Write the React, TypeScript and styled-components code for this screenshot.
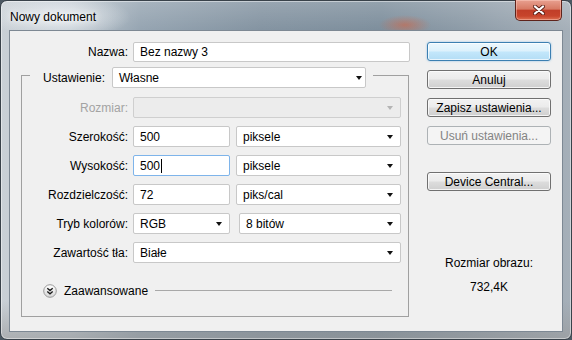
import React from 'react';
import styled, { createGlobalStyle } from 'styled-components';

const GlobalStyle = createGlobalStyle`
    html, body {
        margin: 0;
        padding: 0;
        background: #4c5862;
    }

    body {
        width: 572px;
        height: 340px;
        overflow: hidden;
        font-family: "Liberation Sans", Arial, sans-serif;
        font-size: 12px;
        color: #000;
    }

    * {
        box-sizing: border-box;
    }
`;

const Window = styled.div`
    width: 572px;
    height: 340px;
    display: flex;
    flex-direction: column;
    padding: 0 8px 7px 8px;
    border: 1px solid #39424a;
    border-radius: 7px;
    box-shadow: inset 0 0 0 1px rgba(255, 255, 255, 0.45);
    background:
        radial-gradient(ellipse 26px 10px at 404px 24px, rgba(214, 96, 60, 0.55), rgba(214, 96, 60, 0) 100%),
        radial-gradient(ellipse 70px 22px at 60px 16px, rgba(240, 243, 246, 0.85), rgba(240, 243, 246, 0) 100%),
        linear-gradient(180deg, rgba(255, 255, 255, 0.18) 0px, rgba(255, 255, 255, 0) 30px, rgba(0, 0, 0, 0) 300px, rgba(150, 150, 150, 0.6) 340px),
        linear-gradient(90deg, #c9d0d6 0px, #bcc6ce 70px, #95a4b1 140px, #8393a1 260px, #7d8e9c 380px, #8e9ca8 470px, #a6b0b9 572px);
`;

const TitleBar = styled.div`
    height: 29px;
    display: flex;
    align-items: flex-start;
`;

const Title = styled.div`
    padding: 8px 0 0 1px;
    line-height: 16px;
    font-family: "Liberation Sans", Arial, sans-serif;
    font-size: 12px;
    color: #000;
    text-shadow: 0 0 10px rgba(255, 255, 255, 0.95), 0 0 5px rgba(255, 255, 255, 0.8);
`;

const CloseButton = styled.div`
    margin: -1px 1px 0 auto;
    width: 47px;
    height: 21px;
    display: flex;
    align-items: center;
    justify-content: center;
    border: 1px solid #5e231b;
    border-top: none;
    border-radius: 0 0 5px 5px;
    background: linear-gradient(180deg, #e8a090 0%, #d77a64 45%, #c13e28 52%, #c7442b 80%, #de7152 100%);
    box-shadow: inset 0 0 0 1px rgba(255, 210, 200, 0.45);
`;

const Client = styled.div`
    flex: 1;
    display: flex;
    padding: 11px 11px 0 11px;
    background: #f0f0f0;
    border: 1px solid #7d8893;
`;

const LeftPanel = styled.div`
    width: 389px;
    display: flex;
    flex-direction: column;
`;

const FieldRow = styled.div<{ $label: number; $height?: number }>`
    display: grid;
    grid-template-columns: ${p => p.$label}px 1fr;
    column-gap: 5px;
    height: ${p => p.$height ?? 21}px;
`;

const Label = styled.div<{ $disabled?: boolean }>`
    display: flex;
    align-items: center;
    justify-content: flex-end;
    white-space: nowrap;
    color: ${p => (p.$disabled ? '#a3a3a3' : '#000')};
`;

const Controls = styled.div<{ $gap?: number }>`
    display: flex;
    gap: ${p => p.$gap ?? 6}px;
`;

const TextBox = styled.div<{ $width?: number; $focused?: boolean }>`
    ${p => (p.$width ? `width: ${p.$width}px;` : 'flex: 1;')}
    display: flex;
    align-items: center;
    padding-left: 6px;
    background: #fff;
    border: 1px solid ${p => (p.$focused ? '#7eb4ea' : '#c8c8c8')};
    border-radius: 2px;
    white-space: nowrap;
`;

const Caret = styled.span`
    display: inline-block;
    width: 1px;
    height: 14px;
    margin-left: 1px;
    background: #000;
`;

const SelectBox = styled.div<{ $width?: number; $disabled?: boolean }>`
    ${p => (p.$width ? `width: ${p.$width}px;` : 'flex: 1;')}
    display: flex;
    align-items: center;
    padding-left: 6px;
    background: ${p => (p.$disabled ? '#ececec' : '#fff')};
    border: 1px solid ${p => (p.$disabled ? '#cfcfcf' : '#c8c8c8')};
    border-radius: 2px;
    white-space: nowrap;
`;

const SelectText = styled.span`
    flex: 1;
`;

const Arrow = styled.span<{ $inset: number; $disabled?: boolean }>`
    width: 0;
    height: 0;
    margin: 1px ${p => p.$inset}px 0 0;
    border-left: 3px solid transparent;
    border-right: 3px solid transparent;
    border-top: 4px solid ${p => (p.$disabled ? '#b4b4b4' : '#111')};
`;

const GroupBox = styled.fieldset`
    width: 388px;
    margin: 0;
    padding: 0 7px 18px 0;
    border: 1px solid #a0a0a0;
    min-inline-size: 0;
`;

const Legend = styled.legend`
    margin-left: 8px;
    padding: 5px 7px 0 13px;
`;

const LegendRow = styled.div`
    display: flex;
    height: 21px;
    gap: 7px;
`;

const GroupRows = styled.div`
    display: flex;
    flex-direction: column;
    gap: 8px;
    padding-top: 9px;
`;

const AdvancedRow = styled.div`
    display: flex;
    align-items: center;
    height: 15px;
    margin-top: 20px;
    padding: 0 9px 0 21px;
    gap: 7px;
`;

const AdvancedLine = styled.div`
    flex: 1;
    height: 1px;
    background: #a8a8a8;
`;

const RightPanel = styled.div`
    width: 124px;
    margin-left: 17px;
    display: flex;
    flex-direction: column;
`;

const Button = styled.div<{ $variant?: 'default' | 'disabled'; $spaceBefore?: number }>`
    height: 19px;
    margin-bottom: 9px;
    margin-top: ${p => p.$spaceBefore ?? 0}px;
    display: flex;
    align-items: center;
    justify-content: center;
    border-radius: 3px;
    white-space: nowrap;
    border: 1px solid ${p =>
        p.$variant === 'default' ? '#3c7fb1' : p.$variant === 'disabled' ? '#adb2b5' : '#707070'};
    color: ${p => (p.$variant === 'disabled' ? '#838383' : '#000')};
    background: ${p =>
        p.$variant === 'default'
            ? 'linear-gradient(180deg, #ecf7fd 0%, #dcf1fc 48%, #c3e7fb 52%, #b3ddf5 100%)'
            : p.$variant === 'disabled'
            ? '#f4f4f4'
            : 'linear-gradient(180deg, #f2f2f2 0%, #ebebeb 48%, #dddddd 52%, #cfcfcf 100%)'};
    box-shadow: ${p =>
        p.$variant === 'default'
            ? 'inset 0 0 0 1px rgba(255,255,255,0.7), 0 0 2px rgba(60,150,220,0.6)'
            : p.$variant === 'disabled'
            ? 'none'
            : 'inset 0 0 0 1px rgba(252,252,252,0.8)'};
`;

const ImageSize = styled.div`
    margin-top: 55px;
    display: flex;
    flex-direction: column;
    align-items: center;
    gap: 8px;
    line-height: 16px;
`;

function CloseGlyph() {
    return (
        <svg width="12" height="10" viewBox="0 0 12 10">
            <path d="M2 1.5 L10 8.5 M10 1.5 L2 8.5" stroke="#5a1d14" strokeWidth="4" strokeLinecap="round" />
            <path d="M2 1.5 L10 8.5 M10 1.5 L2 8.5" stroke="#ffffff" strokeWidth="2.3" strokeLinecap="round" />
        </svg>
    );
}

function ExpandIcon() {
    return (
        <svg width="14" height="14" viewBox="0 0 14 14">
            <defs>
                <linearGradient id="exp" x1="0" y1="0" x2="0" y2="1">
                    <stop offset="0" stopColor="#ffffff" />
                    <stop offset="1" stopColor="#d6d6d6" />
                </linearGradient>
            </defs>
            <circle cx="7" cy="7" r="6.3" fill="url(#exp)" stroke="#9a9a9a" strokeWidth="1" />
            <path d="M4.3 4.2 L7 6.6 L9.7 4.2 M4.3 7.4 L7 9.8 L9.7 7.4" fill="none" stroke="#1a1a1a" strokeWidth="1.3" />
        </svg>
    );
}

interface SelectProps {
    value?: string;
    width?: number;
    disabled?: boolean;
    inset?: number;
}

function Select({ value, width, disabled, inset = 7 }: SelectProps) {
    return (
        <SelectBox $width={width} $disabled={disabled}>
            <SelectText>{value}</SelectText>
            <Arrow $inset={inset} $disabled={disabled} />
        </SelectBox>
    );
}

function App() {
    return (
        <>
            <GlobalStyle />
            <Window>
                <TitleBar>
                    <Title>Nowy dokument</Title>
                    <CloseButton>
                        <CloseGlyph />
                    </CloseButton>
                </TitleBar>
                <Client>
                    <LeftPanel>
                        <FieldRow $label={107} $height={20}>
                            <Label>Nazwa:</Label>
                            <TextBox>Bez nazwy 3</TextBox>
                        </FieldRow>
                        <GroupBox>
                            <Legend>
                                <LegendRow>
                                    <Label>Ustawienie:</Label>
                                    <Select value="Własne" width={254} inset={3} />
                                </LegendRow>
                            </Legend>
                            <GroupRows>
                                <FieldRow $label={106}>
                                    <Label $disabled>Rozmiar:</Label>
                                    <Select disabled />
                                </FieldRow>
                                <FieldRow $label={106}>
                                    <Label>Szerokość:</Label>
                                    <Controls>
                                        <TextBox $width={97}>500</TextBox>
                                        <Select value="piksele" />
                                    </Controls>
                                </FieldRow>
                                <FieldRow $label={106}>
                                    <Label>Wysokość:</Label>
                                    <Controls>
                                        <TextBox $width={97} $focused>
                                            500<Caret />
                                        </TextBox>
                                        <Select value="piksele" />
                                    </Controls>
                                </FieldRow>
                                <FieldRow $label={106}>
                                    <Label>Rozdzielczość:</Label>
                                    <Controls>
                                        <TextBox $width={97}>72</TextBox>
                                        <Select value="piks/cal" />
                                    </Controls>
                                </FieldRow>
                                <FieldRow $label={106}>
                                    <Label>Tryb kolorów:</Label>
                                    <Controls $gap={9}>
                                        <Select value="RGB" width={97} />
                                        <Select value="8 bitów" />
                                    </Controls>
                                </FieldRow>
                                <FieldRow $label={106}>
                                    <Label>Zawartość tła:</Label>
                                    <Select value="Białe" />
                                </FieldRow>
                            </GroupRows>
                            <AdvancedRow>
                                <ExpandIcon />
                                <span>Zaawansowane</span>
                                <AdvancedLine />
                            </AdvancedRow>
                        </GroupBox>
                    </LeftPanel>
                    <RightPanel>
                        <Button $variant="default">OK</Button>
                        <Button>Anuluj</Button>
                        <Button>Zapisz ustawienia...</Button>
                        <Button $variant="disabled">Usuń ustawienia...</Button>
                        <Button $spaceBefore={18}>Device Central...</Button>
                        <ImageSize>
                            <span>Rozmiar obrazu:</span>
                            <span>732,4K</span>
                        </ImageSize>
                    </RightPanel>
                </Client>
            </Window>
        </>
    );
}

export default App;
